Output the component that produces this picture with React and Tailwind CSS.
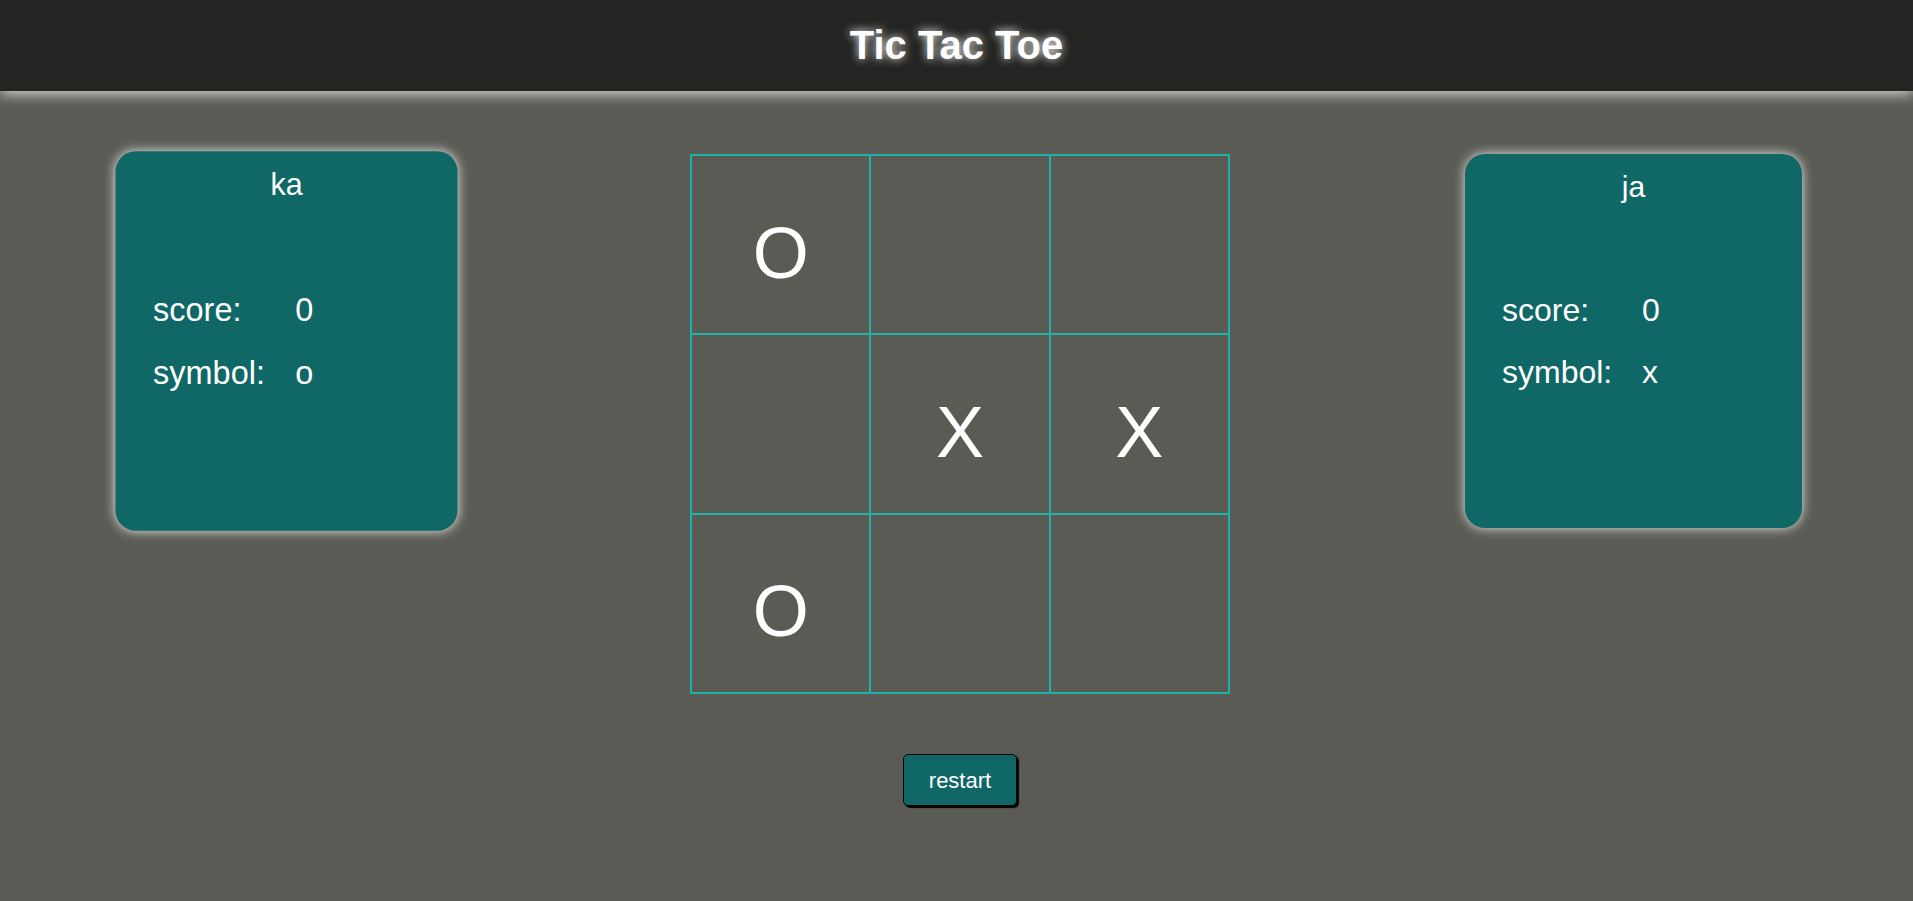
const board = ["O", "", "", "", "X", "X", "O", "", ""];

const PlayerCard = ({ name, score, symbol, className = "" }) => {
  return (
    <div
      className={`flex flex-col w-[337px] h-[374px] shrink-0 rounded-[20px] bg-[#0f6766] text-white shadow-[0_0_12px_rgba(255,255,255,0.85)] ${className}`}
    >
      <div className="pt-[16px] text-center text-[30px] leading-[34px]">{name}</div>
      <div className="mt-[88px] grid grid-cols-[140px_auto] gap-y-[25px] pl-[37px] text-[32px] leading-[37px]">
        <span>score:</span>
        <span>{score}</span>
        <span>symbol:</span>
        <span>{symbol}</span>
      </div>
    </div>
  );
};

const App = () => {
  return (
    <div className="min-h-screen bg-[#5b5b55] font-['Liberation_Sans',Arial,sans-serif]">
      <header className="relative z-10 flex h-[91px] justify-center bg-[#242422] pt-[15px] shadow-[0_2px_14px_rgba(255,255,255,0.85)]">
        <h1 className="text-[40px] font-bold leading-normal text-white [text-shadow:0_0_10px_#fff]">
          Tic Tac Toe
        </h1>
      </header>

      <main className="flex items-start gap-[235px] pl-[118px] pt-[63px]">
        <PlayerCard name="ka" score={0} symbol="o" className="scale-[1.015]" />

        <div className="flex flex-col items-center gap-[60px]">
          <div className="grid h-[540px] w-[540px] grid-cols-3 gap-[2px] bg-[#20b2aa] p-[2px]">
            {board.map((cell, idx) => (
              <div
                key={idx}
                className="flex items-center justify-center bg-[#5b5b55] pt-[16px] text-[72px] leading-none text-white"
              >
                {cell}
              </div>
            ))}
          </div>
          <button className="h-[52px] w-[114px] rounded-[5px] border border-black bg-[#0f6766] text-[22px] text-white shadow-[2px_2px_1px_#000]">
            restart
          </button>
        </div>

        <PlayerCard name="ja" score={0} symbol="x" />
      </main>
    </div>
  );
};

export default App;
